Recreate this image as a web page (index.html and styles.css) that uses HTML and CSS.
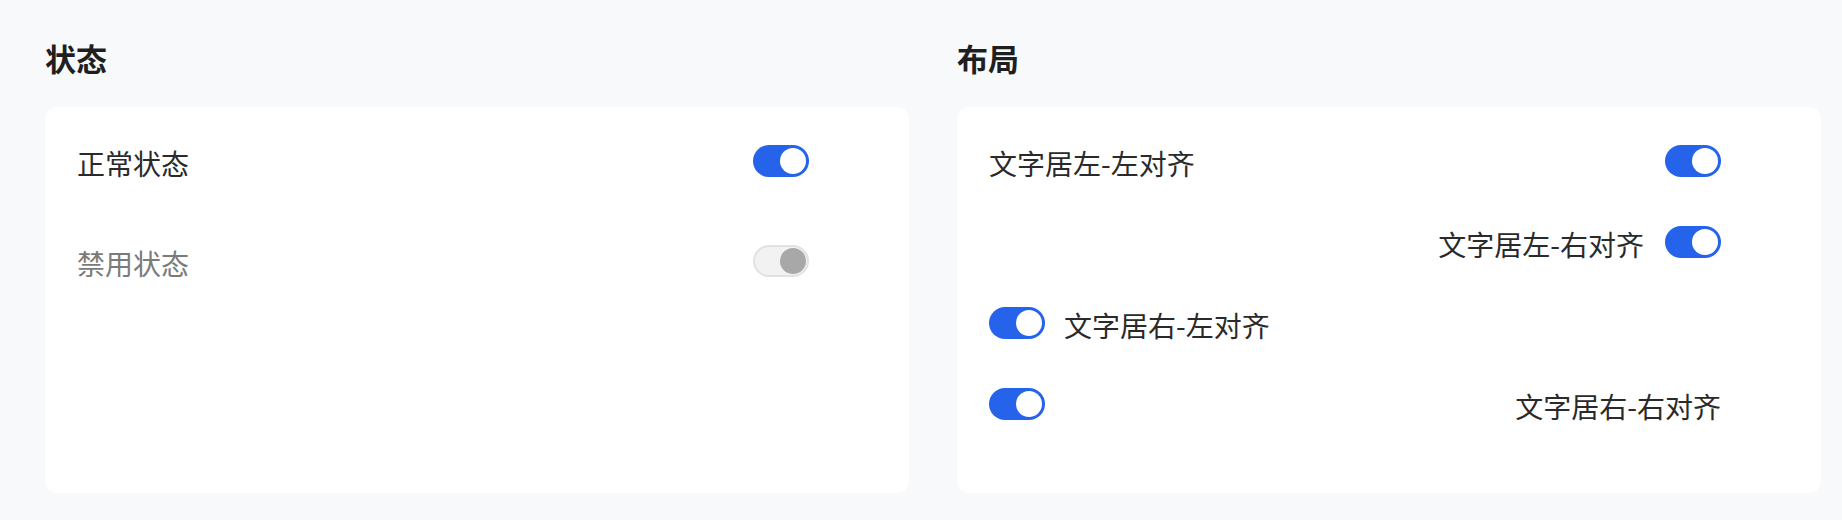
FILE: index.html
```html
<!DOCTYPE html>
<html lang="zh-CN">
<head>
<meta charset="utf-8">
<title>Switch</title>
<link rel="stylesheet" href="styles.css">
</head>
<body>
<main class="page">
  <section class="group">
    <h2 class="group-title">状态</h2>
    <div class="card card-state">
      <div class="row row-between">
        <span class="label">正常状态</span>
        <span class="switch on"><span class="knob"></span></span>
      </div>
      <div class="row row-between">
        <span class="label label-disabled">禁用状态</span>
        <span class="switch disabled"><span class="knob"></span></span>
      </div>
    </div>
  </section>
  <section class="group">
    <h2 class="group-title">布局</h2>
    <div class="card card-layout">
      <div class="row row-between">
        <span class="label">文字居左-左对齐</span>
        <span class="switch on"><span class="knob"></span></span>
      </div>
      <div class="row row-end">
        <span class="label">文字居左-右对齐</span>
        <span class="switch on"><span class="knob"></span></span>
      </div>
      <div class="row row-start">
        <span class="switch on"><span class="knob"></span></span>
        <span class="label">文字居右-左对齐</span>
      </div>
      <div class="row row-between">
        <span class="switch on"><span class="knob"></span></span>
        <span class="label">文字居右-右对齐</span>
      </div>
    </div>
  </section>
</main>
</body>
</html>
```

FILE: styles.css
```css
* { box-sizing: border-box; }

html, body {
  margin: 0;
  padding: 0;
  background: #f8f9fb;
  font-family: "Noto Sans CJK SC", "Noto Sans", sans-serif;
  color: #262626;
}

.page {
  display: grid;
  grid-template-columns: 864px 864px;
  column-gap: 48px;
  padding: 34px 21px 27px 45px;
}

.group {
  display: flex;
  flex-direction: column;
}

.group-title {
  margin: 0 0 25px 0;
  font-size: 31px;
  line-height: 48px;
  font-weight: 700;
  color: #1f1f1f;
}

.card {
  background: #ffffff;
  border-radius: 12px;
  height: 386px;
  padding: 33px 100px 32px 32px;
  display: flex;
  flex-direction: column;
}

.card-state { gap: 58px; }
.card-layout { gap: 39px; }

.row {
  display: flex;
  align-items: center;
  height: 42px;
}

.row-between { justify-content: space-between; }
.row-end { justify-content: flex-end; gap: 21px; }
.row-start { justify-content: flex-start; gap: 19px; }

.label {
  font-size: 28px;
  line-height: 42px;
  color: #2a2a2a;
  padding-top: 3px;
}

.label-disabled { color: #7b7b7b; }

.switch {
  flex: none;
  width: 56px;
  height: 32px;
  border-radius: 16px;
  display: flex;
  align-items: center;
  justify-content: flex-end;
  padding: 0 3px;
}

.switch .knob {
  width: 26px;
  height: 26px;
  border-radius: 50%;
}

.switch.on { background: #2563eb; }
.switch.on .knob { background: #ffffff; }

.switch.disabled {
  background: #f2f2f2;
  border: 2px solid #e2e2e2;
  padding: 0 1px;
}
.switch.disabled .knob { background: #a8a8a8; }
```
